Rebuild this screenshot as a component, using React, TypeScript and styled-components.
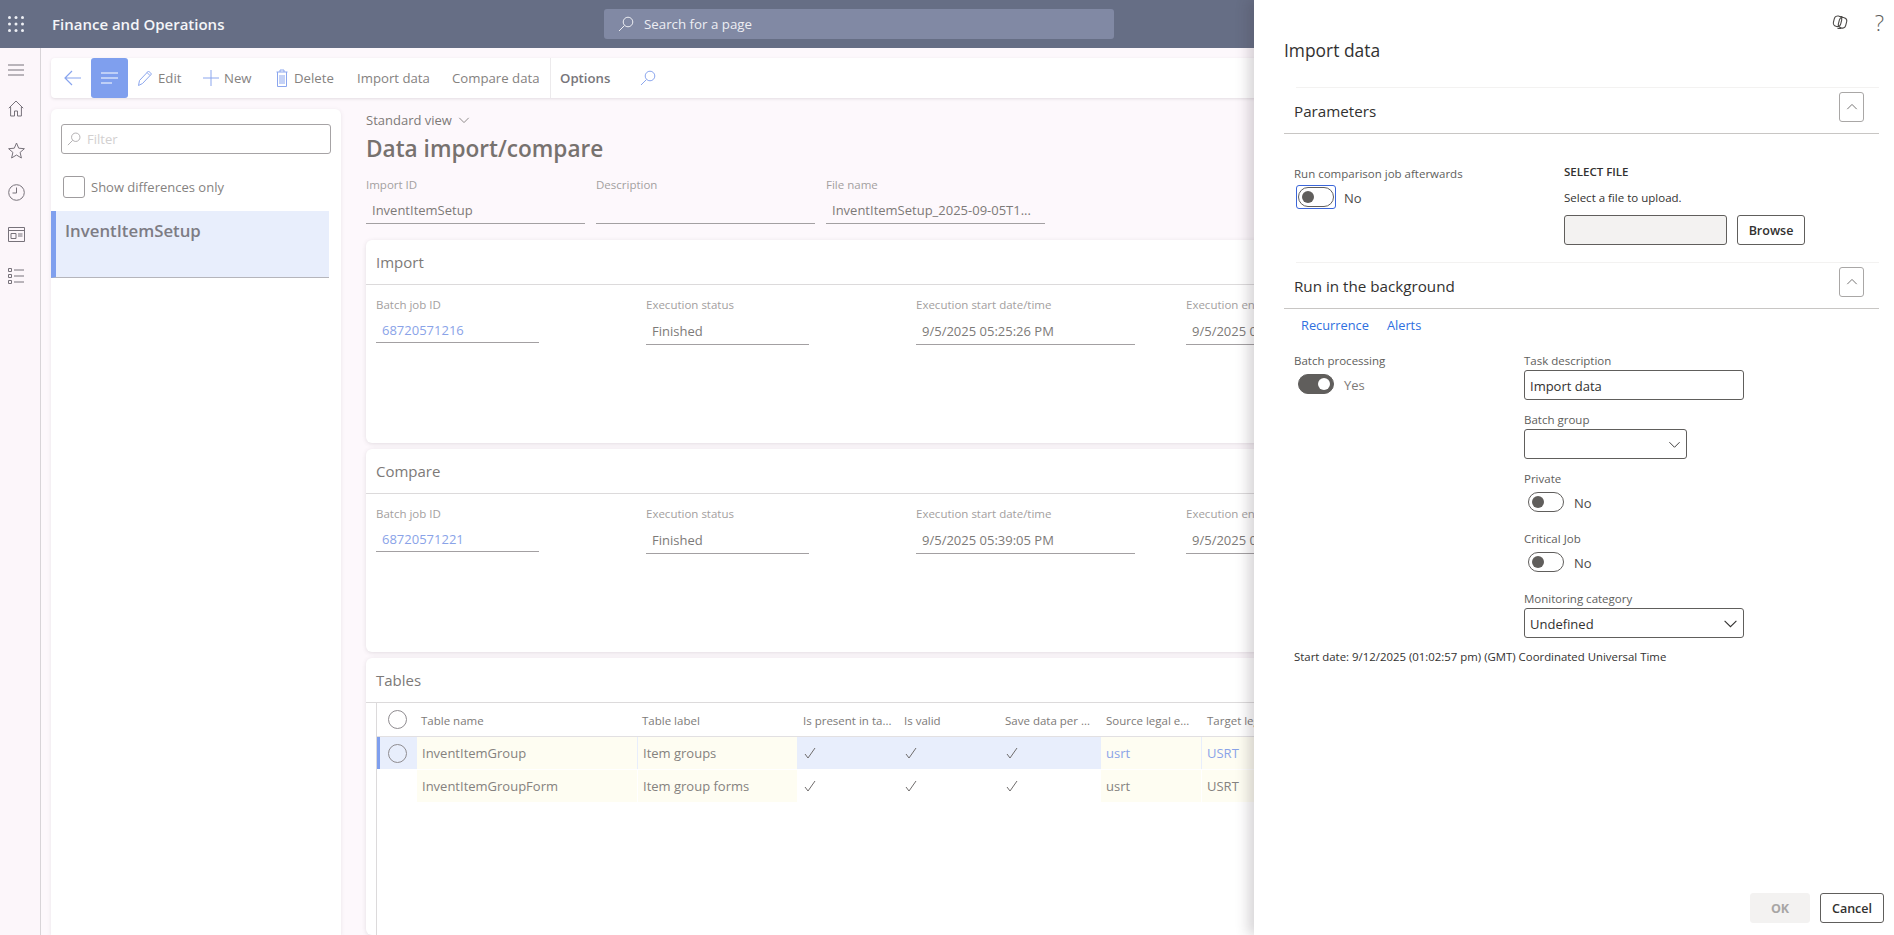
import React from 'react';
import styled, { createGlobalStyle } from 'styled-components';

const Global = createGlobalStyle`
  html, body { margin: 0; padding: 0; height: 100%; overflow: hidden; background: #fdf8fc; }
  body { font-family: "Open Sans", "Liberation Sans", sans-serif; font-size: 13px; color: #7d7a78; }
  * { box-sizing: border-box; }
`;

const Page = styled.div`
  position: relative; width: 1894px; height: 935px; overflow: hidden;
  display: flex; flex-direction: column; background: #fdf8fc;
`;
const Header = styled.header`
  height: 48px; flex: none; background: #666e85; display: flex; align-items: center; color: #fff;
`;
const Waffle = styled.div`
  width: 32px; display: flex; justify-content: center; align-items: center;
`;
const AppName = styled.div`
  margin-left: 20px; width: 552px; font-size: 15px; font-weight: 600; color: #f4f5f8;
`;
const SearchBox = styled.div`
  width: 510px; height: 30px; border-radius: 3px; background: #8189a4; display: flex; align-items: center;
  padding-left: 14px; gap: 10px; font-size: 13.3px; color: #edeef3;
`;
const Body = styled.div`
  flex: 1; display: flex; min-height: 0;
`;
const Nav = styled.nav`
  width: 41px; flex: none; border-right: 1px solid #d8d4d8; display: flex; flex-direction: column; align-items: center;
  padding: 10px 8px 0 0; gap: 18px; background: #fcf6fa;
`;
const NavIcon = styled.div<{ $tight?: boolean }>`
  height: 24px; display: flex; align-items: center; justify-content: center; color: #77727a;
  margin-bottom: ${p => (p.$tight ? -4 : 0)}px;
`;
const Content = styled.div`
  flex: 1; min-width: 0; padding: 10px 0 0 10px; display: flex; flex-direction: column;
`;
const Toolbar = styled.div`
  height: 40px; flex: none; background: #fff; border-radius: 4px; display: flex; align-items: stretch;
  box-shadow: 0 1px 3px rgba(90, 80, 90, 0.16);
`;
const BackButton = styled.div`
  width: 40px; padding-left: 4px; display: flex; align-items: center; justify-content: center; color: #88a4ee;
`;
const ActiveButton = styled.div`
  width: 37px; border-radius: 3px; background: #7f9fee; display: flex; align-items: center; justify-content: center;
`;
const ToolButton = styled.div<{ $w: number; $gap?: number; $strong?: boolean; $divider?: boolean }>`
  width: ${p => p.$w}px; display: flex; align-items: center; gap: ${p => p.$gap ?? 5}px; padding-left: 9px; font-size: 13.2px; white-space: nowrap;
  font-weight: ${p => (p.$strong ? 600 : 400)};
  color: ${p => (p.$strong ? '#77757a' : '#85827f')};
  border-left: ${p => (p.$divider ? '1px solid #eceaec' : 'none')};
  svg { color: #8ba6ee; flex: none; }
`;
const Columns = styled.div`
  flex: 1; min-height: 0; display: flex; margin-top: 11px;
`;
const LeftPane = styled.aside`
  width: 290px; flex: none; background: #fff; border-radius: 6px 6px 0 0; padding-top: 15px;
  box-shadow: 0 1px 4px rgba(90, 80, 90, 0.12); display: flex; flex-direction: column;
`;
const FilterBox = styled.div`
  margin-left: 10px; width: 270px; height: 30px; border: 1px solid #a6a3a5; border-radius: 3px; display: flex;
  align-items: center; padding-left: 5px; gap: 6px; color: #d2d0d0; font-size: 13px;
  svg { color: #a8a6a8; }
`;
const CheckRow = styled.label`
  display: flex; align-items: center; margin: 22px 0 0 12px; gap: 6px; font-size: 13px; color: #85827f;
`;
const CheckBox = styled.span`
  width: 22px; height: 22px; border: 1px solid #9f9c9e; border-radius: 3px; display: block;
`;
const ListItem = styled.div`
  margin-top: 13px; width: 278px; height: 67px; background: #e8eefc; border-left: 5px solid #7f9fee;
  border-bottom: 1px solid #b5b5bb; padding: 8px 0 0 9px; font-size: 16.8px; font-weight: 600; color: #7d7c84;
`;
const Main = styled.main`
  flex: 1; min-width: 0; padding-left: 25px;
`;
const ViewSelector = styled.div`
  display: flex; align-items: center; gap: 6px; height: 20px; margin-top: 1px; font-size: 13px; color: #7d7a78;
`;
const Title = styled.h1`
  margin: 2px 0 0; height: 34px; line-height: 34px; font-size: 22.6px; font-weight: 600; color: #77726f;
`;
const HeadFields = styled.div`
  display: grid; grid-template-columns: repeat(3, 230px); margin-top: 11px;
`;
const Label = styled.div`
  font-size: 11.5px; line-height: 16px; font-weight: 500; color: #a3a0a0; white-space: nowrap;
`;
const ValueLine = styled.div<{ $w: number; $link?: boolean; $mt?: number; $h?: number; $pt?: number }>`
  width: ${p => p.$w}px; height: ${p => p.$h ?? 29}px; margin-top: ${p => p.$mt ?? 0}px; padding: ${p => p.$pt ?? 5}px 0 0 6px;
  font-size: 13px; line-height: 20px; white-space: nowrap;
  border-bottom: 1px solid #a3a0a2;
  color: ${p => (p.$link ? '#8aa3e8' : '#7d7a78')};
`;
const Card = styled.section<{ $h?: number; $mt?: number }>`
  width: 1520px; height: ${p => (p.$h ? `${p.$h}px` : 'auto')}; margin-top: ${p => p.$mt ?? 6}px; background: #fff; border-radius: 6px;
  box-shadow: 0 1px 4px rgba(90, 80, 90, 0.16);
`;
const CardTitle = styled.div`
  height: 45px; padding: 0 10px; line-height: 45px; font-size: 15px; font-weight: 500; color: #7d7a78; border-bottom: 1px solid #dcdadb;
`;
const CardFields = styled.div`
  display: grid; grid-template-columns: repeat(4, 270px); padding: 12px 0 0 10px;
`;
const GridWrap = styled.div`
  margin-left: 10px; height: 232px; border-left: 1px solid #dcdadb;
`;
const GridRow = styled.div<{ $head?: boolean; $selected?: boolean }>`
  display: grid; grid-template-columns: 40px 221px 160px repeat(5, 101px); height: ${p => (p.$head ? 34 : 32)}px;
  border-bottom: ${p => (p.$head ? '1px solid #e2e0e2' : 'none')};
  background: ${p => (p.$selected ? '#e8eefc' : 'transparent')};
  box-shadow: ${p => (p.$selected ? 'inset 3px 0 0 #7f9fee' : 'none')};
  margin-bottom: ${p => (p.$selected ? 1 : 0)}px;
`;
const Cell = styled.div<{ $yellow?: boolean; $link?: boolean }>`
  display: flex; align-items: center; padding-left: 5px; overflow: hidden; white-space: nowrap;
  font-size: 13px;
  color: ${p => (p.$link ? '#8aa3e8' : '#85827f')};
  background: ${p => (p.$yellow ? '#fefdf2' : 'transparent')};
  margin-right: ${p => (p.$yellow ? 1 : 0)}px;
`;
const HeadCell = styled.div<{ $indent?: number }>`
  display: flex; align-items: center; padding: 1px 0 0 ${p => p.$indent ?? 4}px; overflow: hidden; white-space: nowrap;
  font-size: 11.5px; font-weight: 500; color: #7d7a78;
`;
const RadioCell = styled.div`
  display: flex; align-items: center; justify-content: center;
`;
const Radio = styled.span`
  width: 19px; height: 19px; border: 1px solid #8f8c90; border-radius: 50%; display: block;
`;

/* Side panel */
const Panel = styled.aside`
  position: absolute; top: 0; right: 0; width: 640px; height: 935px; background: #fff; padding-left: 30px;
  box-shadow: -6px 0 12px rgba(60, 50, 60, 0.2); color: #323130;
  display: flex; flex-direction: column;
`;
const CornerIcons = styled.div`
  position: absolute; top: 8px; right: 10px; display: flex; align-items: center; gap: 27px; color: #605e5c; font-size: 22px; font-weight: 300; line-height: 28px;
`;
const PanelTitle = styled.h2`
  margin: 37px 0 0; height: 26px; line-height: 26px; font-size: 17.4px; font-weight: 500; color: #323130;
`;
const Section = styled.div`
  width: 595px;
`;
const SectionHead = styled.div<{ $mt: number }>`
  margin-top: ${p => p.$mt}px; height: 46px; padding: 1px 15px 0 10px; display: flex; align-items: center; justify-content: space-between;
  border-bottom: 1px solid #c8c6c4; font-size: 15.2px; font-weight: 500; color: #323130; position: relative;
  &::before { content: ''; position: absolute; top: -1px; left: 12px; right: 0; border-top: 1px solid #f3f2f1; }
`;
const Collapse = styled.button`
  width: 25px; height: 30px; margin-top: -9px; background: #fff; border: 1px solid #a9a7a6; border-radius: 3px; padding: 0; display: flex;
  align-items: center; justify-content: center; color: #605e5c;
`;
const Params = styled.div`
  display: flex; height: 129px; padding: 32px 0 0 10px;
`;
const ParamLeft = styled.div`
  width: 270px;
`;
const ParamRight = styled.div`
  flex: 1; margin-top: -2px;
`;
const PanelLabel = styled.div`
  font-size: 11.5px; line-height: 16px; color: #605e5c; white-space: nowrap;
`;
const ToggleRow = styled.div<{ $ml?: number }>`
  display: flex; align-items: center; gap: 10px; margin: 5px 0 0 ${p => p.$ml ?? 4}px; height: 20px; font-size: 13px; color: #4b4948;
`;
const ToggleText = styled.span<{ $muted?: boolean }>`
  padding-top: 1px; color: ${p => (p.$muted ? '#7d7a78' : '#4b4948')};
`;
const Focus = styled.span`
  display: block; padding: 1px; margin: -2px; border: 1px solid #3c66d8; border-radius: 3px; line-height: 0;
`;
const Toggle = styled.span<{ $on?: boolean }>`
  position: relative; display: block; width: 36px; height: 20px; border-radius: 10px;
  border: 1px solid #605e5c;
  background: ${p => (p.$on ? '#605e5c' : '#fff')};
  &::after {
    content: ''; position: absolute; top: 3px; width: 12px; height: 12px; border-radius: 50%;
    left: ${p => (p.$on ? '19px' : '3px')};
    background: ${p => (p.$on ? '#fff' : '#605e5c')};
  }
`;
const FileHeading = styled.div`
  font-size: 11.5px; line-height: 16px; font-weight: 600; color: #323130;
`;
const FileHint = styled.div`
  margin-top: 10px; font-size: 11.5px; line-height: 16px; color: #323130;
`;
const FileRow = styled.div`
  display: flex; gap: 10px; margin-top: 9px;
`;
const FileInput = styled.div`
  width: 163px; height: 30px; background: #f3f2f1; border: 1px solid #605e5c; border-radius: 3px;
`;
const Btn = styled.button<{ $w: number }>`
  width: ${p => p.$w}px; height: 30px; background: #fff; border: 1px solid #605e5c; border-radius: 3px; padding: 0;
  font: 600 12.5px "Open Sans", sans-serif; color: #323130;
`;
const DisabledBtn = styled(Btn)`
  background: #f3f2f1; border-color: #f3f2f1; color: #a8a6a5; font-weight: 700;
`;
const Tabs = styled.div`
  display: flex; gap: 18px; padding: 7px 0 0 17px; height: 37px; font-size: 12.8px; color: #2f6fe0; line-height: 18px;
`;
const BatchForm = styled.div`
  display: flex; padding-left: 10px;
`;
const BatchLeft = styled.div`
  width: 230px; margin-top: 7px;
`;
const BatchRight = styled.div`
  display: flex; flex-direction: column; margin-top: 7px;
`;
const InputBox = styled.div<{ $w: number; $last?: boolean }>`
  width: ${p => p.$w}px; height: 30px; margin: 1px 0 ${p => (p.$last ? 0 : 12)}px; padding: 1px 5px 0; border: 1px solid #605e5c; border-radius: 3px; display: flex;
  align-items: center; justify-content: space-between; font-size: 13px; color: #323130; background: #fff;
`;
const ToggleBlock = styled.div`
  height: 60px;
`;
const StartDate = styled.div`
  margin: 11px 0 0 10px; font-size: 11.4px; line-height: 16px; color: #323130; white-space: nowrap;
`;
const Footer = styled.div`
  margin-top: auto; display: flex; justify-content: flex-end; gap: 10px; padding: 0 10px 12px 0;
`;

const Ico = styled.svg`
  display: block; fill: none; stroke: currentColor; stroke-width: 1;
`;
const SearchIcon = ({ s = 15 }: { s?: number }) => (
  <Ico width={s} height={s} viewBox="0 0 16 16"><circle cx="10" cy="6" r="4.8" /><path d="M6.500 9.500 1 15" /></Ico>
);
const Chevron = ({ up, s = 14 }: { up?: boolean; s?: number }) => (
  <Ico width={s} height={s} viewBox="0 0 14 14">
    <path d={up ? 'M1.500 9.500 7 4l5.500 5.500' : 'M1.500 4.500 7 10l5.500-5.500'} />
  </Ico>
);
const Check = () => (
  <Ico width="14" height="14" viewBox="0 0 14 14"><path d="M2 8l3 4 7-10" stroke="#6f6c6c" /></Ico>
);

const checks = [0, 1, 2];
const rows = [
  { name: 'InventItemGroup', label: 'Item groups', selected: true },
  { name: 'InventItemGroupForm', label: 'Item group forms', selected: false },
];

function BatchFields({ id, start }: { id: string; start: string }) {
  return (
    <CardFields>
      <div><Label>Batch job ID</Label><ValueLine $w={163} $link $h={30} $pt={7}>{id}</ValueLine></div>
      <div><Label>Execution status</Label><ValueLine $w={163} $h={31} $mt={1} $pt={7}>Finished</ValueLine></div>
      <div><Label>Execution start date/time</Label><ValueLine $w={219} $h={31} $mt={1} $pt={7}>{start}</ValueLine></div>
      <div><Label>Execution en</Label><ValueLine $w={219} $h={31} $mt={1} $pt={7}>9/5/2025 0</ValueLine></div>
    </CardFields>
  );
}

export default function App() {
  return (
    <Page>
      <Global />
      <Header>
        <Waffle>
          <svg width="16" height="16" viewBox="0 0 16 16" fill="#eef0f5">
            {[1.5, 8, 14.5].flatMap(y => [1.5, 8, 14.5].map(x => <circle key={`${x}-${y}`} cx={x} cy={y} r="1.5" />))}
          </svg>
        </Waffle>
        <AppName>Finance and Operations</AppName>
        <SearchBox><SearchIcon s={16} />Search for a page</SearchBox>
      </Header>
      <Body>
        <Nav>
          <NavIcon $tight>
            <Ico width="16" height="12" viewBox="0 0 16 12"><path d="M0 1h16M0 6h16M0 11h16" /></Ico>
          </NavIcon>
          <NavIcon>
            <Ico width="16" height="17" viewBox="0 0 16 17"><path d="M.8 8.200 8 1l7.200 7.200M2.600 6.800v9.200h3.900v-5h3v5h3.900V6.800" /></Ico>
          </NavIcon>
          <NavIcon>
            <Ico width="17" height="17" viewBox="0 0 17 17"><path d="M8.500 1l2.200 5.200 5.700.5-4.300 3.700 1.300 5.600-4.900-3-4.900 3 1.300-5.600L.6 6.700l5.700-.5z" /></Ico>
          </NavIcon>
          <NavIcon>
            <Ico width="17" height="17" viewBox="0 0 17 17"><circle cx="8.500" cy="8.500" r="7.800" /><path d="M8.500 3.500v5.500h-4" /></Ico>
          </NavIcon>
          <NavIcon>
            <Ico width="17" height="15" viewBox="0 0 17 15"><path d="M.5.500h16v14H.5zM.5 3.500h16M3 6.500h5v5H3zM10 7h4.500M10 9h4.500" /></Ico>
          </NavIcon>
          <NavIcon>
            <Ico width="17" height="16" viewBox="0 0 17 16"><path d="M.5.500h3v3h-3zM.5 6.500h3v3h-3zM.5 12.500h3v3h-3zM6 2h10M6 8h10M6 14h10" /></Ico>
          </NavIcon>
        </Nav>
        <Content>
          <Toolbar>
            <BackButton>
              <Ico width="18" height="16" viewBox="0 0 18 16"><path d="M8 1 1 8l7 7M1 8h16" strokeWidth="1.200" /></Ico>
            </BackButton>
            <ActiveButton>
              <Ico width="17" height="12" viewBox="0 0 17 12" style={{ color: '#fff' }}><path d="M0 1h17M0 6h17M0 11h11" /></Ico>
            </ActiveButton>
            <ToolButton $w={66} $gap={5}>
              <Ico width="16" height="18" viewBox="0 0 16 18"><path d="M1.500 16.500l1-5L11.500 2l3 3-9 9.500zM10 3.500l3 3" /></Ico>Edit
            </ToolButton>
            <ToolButton $w={73} $gap={5}>
              <Ico width="16" height="16" viewBox="0 0 16 16"><path d="M8 0v16M0 8h16" /></Ico>New
            </ToolButton>
            <ToolButton $w={81} $gap={6}>
              <Ico width="12" height="18" viewBox="0 0 12 18"><path d="M.5 3h11M4 3V1h4v2M1.500 3v14.500h9V3M4 6v9M6 6v9M8 6v9" /></Ico>Delete
            </ToolButton>
            <ToolButton $w={95}>Import data</ToolButton>
            <ToolButton $w={107}>Compare data</ToolButton>
            <ToolButton $w={81} $strong $divider>Options</ToolButton>
            <ToolButton $w={30}><SearchIcon s={16} /></ToolButton>
          </Toolbar>
          <Columns>
            <LeftPane>
              <FilterBox><SearchIcon s={14} />Filter</FilterBox>
              <CheckRow><CheckBox />Show differences only</CheckRow>
              <ListItem>InventItemSetup</ListItem>
            </LeftPane>
            <Main>
              <ViewSelector>Standard view <Chevron s={12} /></ViewSelector>
              <Title>Data import/compare</Title>
              <HeadFields>
                <div><Label>Import ID</Label><ValueLine $w={219} $mt={2} $pt={5}>InventItemSetup</ValueLine></div>
                <div><Label>Description</Label><ValueLine $w={219} $mt={2} /></div>
                <div><Label>File name</Label><ValueLine $w={219} $mt={2} $pt={5}>InventItemSetup_2025-09-05T1...</ValueLine></div>
              </HeadFields>
              <Card $h={203} $mt={16}>
                <CardTitle>Import</CardTitle>
                <BatchFields id="68720571216" start="9/5/2025 05:25:26 PM" />
              </Card>
              <Card $h={203}>
                <CardTitle>Compare</CardTitle>
                <BatchFields id="68720571221" start="9/5/2025 05:39:05 PM" />
              </Card>
              <Card>
                <CardTitle>Tables</CardTitle>
                <GridWrap>
                  <GridRow $head>
                    <RadioCell><Radio /></RadioCell>
                    <HeadCell>Table name</HeadCell>
                    <HeadCell>Table label</HeadCell>
                    <HeadCell $indent={5}>Is present in ta...</HeadCell>
                    <HeadCell $indent={5}>Is valid</HeadCell>
                    <HeadCell $indent={5}>Save data per ...</HeadCell>
                    <HeadCell $indent={5}>Source legal e...</HeadCell>
                    <HeadCell $indent={5}>Target legal e...</HeadCell>
                  </GridRow>
                  {rows.map(r => (
                    <GridRow key={r.name} $selected={r.selected}>
                      <RadioCell>{r.selected && <Radio />}</RadioCell>
                      <Cell $yellow>{r.name}</Cell>
                      <Cell $yellow>{r.label}</Cell>
                      {checks.map(c => <Cell key={c}><Check /></Cell>)}
                      <Cell $yellow $link={r.selected}>usrt</Cell>
                      <Cell $yellow $link={r.selected}>USRT</Cell>
                    </GridRow>
                  ))}
                </GridWrap>
              </Card>
            </Main>
          </Columns>
        </Content>
      </Body>
      <Panel>
        <CornerIcons>
          <svg width="16" height="16" viewBox="0 0 16 16" fill="none" stroke="#4c4a48" strokeWidth="1.100">
            <rect x="1.800" y="2" width="7.500" height="10.500" rx="3.400" transform="rotate(14 5.500 7.200)" />
            <rect x="6.800" y="3.500" width="7.500" height="10.500" rx="3.400" transform="rotate(14 10.500 8.700)" />
            <path d="M7 2.500h3.500M5.500 14.500h4" />
          </svg>
          <span>?</span>
        </CornerIcons>
        <PanelTitle>Import data</PanelTitle>
        <Section>
          <SectionHead $mt={25}>Parameters<Collapse><Chevron up s={12} /></Collapse></SectionHead>
          <Params>
            <ParamLeft>
              <PanelLabel>Run comparison job afterwards</PanelLabel>
              <ToggleRow $ml={4}><Focus><Toggle /></Focus><ToggleText>No</ToggleText></ToggleRow>
            </ParamLeft>
            <ParamRight>
              <FileHeading>SELECT FILE</FileHeading>
              <FileHint>Select a file to upload.</FileHint>
              <FileRow><FileInput /><Btn $w={68}>Browse</Btn></FileRow>
            </ParamRight>
          </Params>
          <SectionHead $mt={0}>Run in the background<Collapse><Chevron up s={12} /></Collapse></SectionHead>
          <Tabs><span>Recurrence</span><span>Alerts</span></Tabs>
          <BatchForm>
            <BatchLeft>
              <PanelLabel>Batch processing</PanelLabel>
              <ToggleRow $ml={4}><Toggle $on /><ToggleText $muted>Yes</ToggleText></ToggleRow>
            </BatchLeft>
            <BatchRight>
              <PanelLabel>Task description</PanelLabel>
              <InputBox $w={220}>Import data</InputBox>
              <PanelLabel>Batch group</PanelLabel>
              <InputBox $w={163}><span /><Chevron s={13} /></InputBox>
              <ToggleBlock>
                <PanelLabel>Private</PanelLabel>
                <ToggleRow><Toggle /><ToggleText>No</ToggleText></ToggleRow>
              </ToggleBlock>
              <ToggleBlock>
                <PanelLabel>Critical Job</PanelLabel>
                <ToggleRow><Toggle /><ToggleText>No</ToggleText></ToggleRow>
              </ToggleBlock>
              <PanelLabel>Monitoring category</PanelLabel>
              <InputBox $w={220} $last>Undefined<Chevron s={15} /></InputBox>
            </BatchRight>
          </BatchForm>
          <StartDate>Start date: 9/12/2025 (01:02:57 pm) (GMT) Coordinated Universal Time</StartDate>
        </Section>
        <Footer>
          <DisabledBtn $w={60}>OK</DisabledBtn>
          <Btn $w={64}>Cancel</Btn>
        </Footer>
      </Panel>
    </Page>
  );
}
